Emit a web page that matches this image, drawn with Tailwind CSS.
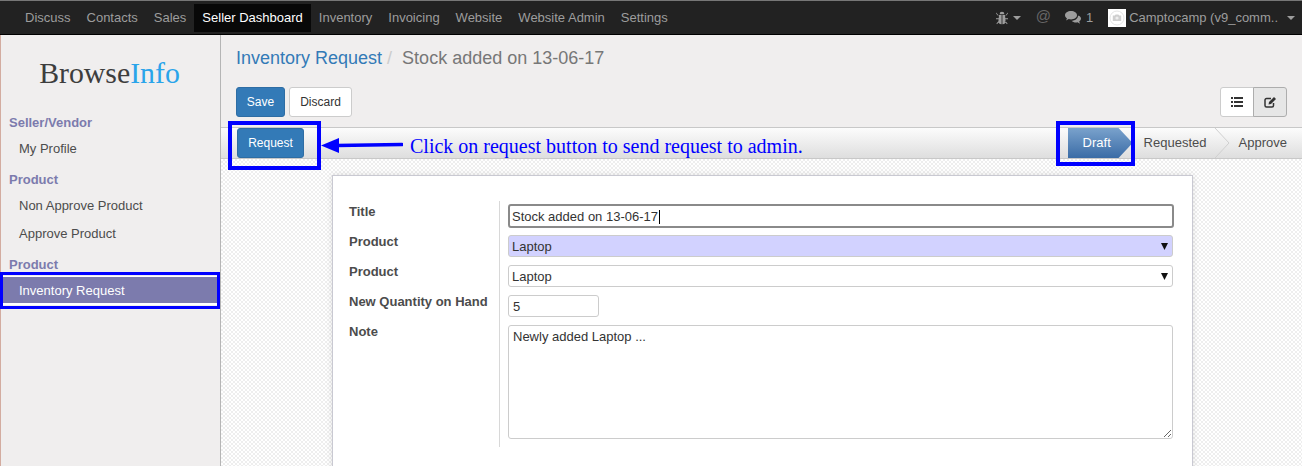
<!DOCTYPE html>
<html lang="en">
<head>
  <meta charset="UTF-8" />
  <meta name="viewport" content="width=device-width, initial-scale=1.0"/>
  <title>Inventory Request</title>
  <script src="https://cdn.jsdelivr.net/npm/@tailwindcss/browser@4"></script>
</head>
<body class="relative h-[466px] w-[1302px] overflow-hidden bg-[#f0eeee] font-['Liberation_Sans',Arial,sans-serif] text-[13px] text-[#4c4c4c]">

  <!-- top bar -->
  <nav class="flex h-[35px] items-center border-t border-b border-t-[#777] border-b-black bg-[#222] pl-[15px] pr-[5px] text-[#9d9d9d]">
    <a class="px-[10px]">Discuss</a>
    <a class="px-[6px]">Contacts</a>
    <a class="pl-[10px] pr-[8px]">Sales</a>
    <a class="flex h-[28px] items-center bg-[#080808] px-[8px] text-white">Seller Dashboard</a>
    <a class="px-[8px]">Inventory</a>
    <a class="px-[8px]">Invoicing</a>
    <a class="px-[8px]">Website</a>
    <a class="px-[8px]">Website Admin</a>
    <a class="px-[8px]">Settings</a>
    <div class="ml-auto flex items-center">
      <svg class="h-[14px] w-[12px]" viewBox="0 0 12 14" fill="#9d9d9d"><path d="M3.600 3.200a2.400 2.400 0 0 1 4.800 0zM3 4h2.600v9.200A3 3 0 0 1 2.400 10.500zM6.400 4H9l.6 6.500a3 3 0 0 1-3.200 2.700zM0 1.600l2.600 2.600-.6.6L-.2 2.400zM12 1.600 9.400 4.200l.6.6 2.200-2.400zM0 7.200h3v1H0zM9 7.200h3v1H9zM.4 12.600 2.600 10l.6.7L1 13.300zM11.600 12.600 9.400 10l-.6.7 2.200 2.600z"/></svg>
      <span class="ml-[5px] h-0 w-0 border-x-[4px] border-t-[4px] border-x-transparent border-t-[#9d9d9d]"></span>
      <span class="ml-[15px] -translate-y-px text-[15px] text-[#666]">@</span>
      <svg class="ml-[14px] h-[13px] w-[16px]" viewBox="0 0 16 13" fill="#9d9d9d"><path d="M6 0C2.700 0 0 1.800 0 4.200c0 1.300.8 2.400 2 3.200L1 9.600l2.800-1.500c.7.200 1.400.3 2.200.3 3.300 0 6-1.900 6-4.200S9.300 0 6 0z"/><path d="M13 4.700c0 2.800-3 5-6.400 5 1 1.100 2.600 1.800 4.400 1.800.5 0 1-.1 1.500-.2l2.500 1.400-.8-2.100c1.100-.8 1.800-1.800 1.800-3 0-1.200-.9-2.300-2.100-2.900z"/></svg>
      <span class="ml-[5px]">1</span>
      <span class="ml-[15px] flex h-[18px] w-[18px] items-center justify-center bg-white">
        <svg class="h-[16px] w-[16px]" viewBox="0 0 16 16" fill="none"><circle cx="8" cy="8" r="7" stroke="#e4e4e4" stroke-width="1"/><path d="M3.800 5.500h2l.8-1h2.800l.8 1h2v5.500H3.800z" fill="#cfcfcf"/><circle cx="8" cy="8" r="1.600" fill="#eee"/></svg>
      </span>
      <span class="ml-[3px]">Camptocamp (v9_comm..</span>
      <span class="ml-[9px] mr-[2px] h-0 w-0 border-x-[4px] border-t-[4px] border-x-transparent border-t-[#9d9d9d]"></span>
    </div>
  </nav>

  <div class="flex h-[431px]">
    <!-- sidebar -->
    <aside class="w-[221px] shrink-0 border-r border-l border-r-[#b5b5b5] border-l-[#d3aca0] bg-[#f0eeee]">
      <div class="flex h-[76px] items-center justify-center pr-[2px] font-['Liberation_Serif',serif] text-[29.800px] text-[#3d3d3d]">
        <span>Browse<span class="text-[#2aa4ea]">Info</span></span>
      </div>
      <h4 class="mt-[2px] h-[19px] pl-[8px] text-[13px] leading-[19px] font-bold text-[#7c7bad]">Seller/Vendor</h4>
      <a class="mt-[3px] block h-[28px] pl-[18px] leading-[28px]">My Profile</a>
      <h4 class="mt-[7px] h-[19px] pl-[8px] text-[13px] leading-[19px] font-bold text-[#7c7bad]">Product</h4>
      <a class="mt-[3px] block h-[28px] pl-[18px] leading-[28px]">Non Approve Product</a>
      <a class="block h-[28px] pl-[18px] leading-[28px]">Approve Product</a>
      <h4 class="mt-[7px] h-[19px] pl-[8px] text-[13px] leading-[19px] font-bold text-[#7c7bad]">Product</h4>
      <a class="mt-[2px] block h-[29px] border-t border-b-2 border-y-white bg-[#7c7bad] pl-[18px] leading-[27px] text-white">Inventory Request</a>
    </aside>

    <main class="flex min-w-0 flex-1 flex-col">
      <!-- control panel -->
      <div class="h-[92px] shrink-0 px-[15px]">
        <div class="flex h-[45px] items-center pt-[1px] text-[18px]">
          <a class="text-[#337ab7]">Inventory Request</a>
          <span class="ml-[5px] text-[#ccc]">/</span>
          <span class="ml-[10px] text-[#777]">Stock added on 13-06-17</span>
        </div>
        <div class="mt-[7px] flex items-center">
          <button class="h-[30px] w-[49px] rounded-[3px] border border-[#2e6da4] bg-[#337ab7] text-[12px] text-white">Save</button>
          <button class="ml-[4px] h-[30px] w-[63px] rounded-[3px] border border-[#ccc] bg-white text-[12px] text-[#333]">Discard</button>
          <div class="ml-auto flex h-[30px]">
            <button class="flex w-[34px] items-center justify-center rounded-l-[3px] border border-[#ccc] bg-white">
              <svg class="h-[10px] w-[12px]" viewBox="0 0 12 10" fill="#333"><path d="M0 0h2v2H0zM3 0h9v2H3zM0 4h2v2H0zM3 4h9v2H3zM0 8h2v2H0zM3 8h9v2H3z"/></svg>
            </button>
            <button class="-ml-px flex w-[34px] items-center justify-center rounded-r-[3px] border border-[#adadad] bg-[#e6e6e6]">
              <svg class="h-[12px] w-[13px]" viewBox="0 0 13 12" fill="none" stroke="#333" stroke-width="1.500"><path d="M9.500 7v2.500a1.500 1.500 0 0 1-1.500 1.500H2.500A1.500 1.500 0 0 1 1 9.500V4a1.500 1.500 0 0 1 1.500-1.500H7"/><path d="M4.500 8.500 5 6l5-5 2 2-5 5z" fill="#333" stroke="none"/></svg>
            </button>
          </div>
        </div>
      </div>

      <!-- status bar -->
      <div class="flex h-[32px] shrink-0 items-center justify-between border-y border-[#c8c8c8] bg-gradient-to-b from-[#fcfcfc] to-[#dedede] pl-[16px]">
        <button class="h-[30px] w-[67px] rounded-[3px] border border-[#2e6da4] bg-[#337ab7] text-[12px] text-white">Request</button>
        <div class="flex h-full items-center">
          <div class="flex h-full w-[65px] items-center bg-gradient-to-b from-[#7aa2cc] to-[#3a6ca6] pl-[15px] text-white [clip-path:polygon(0_0,51px_0,100%_50%,51px_100%,0_100%)]">Draft</div>
          <span class="ml-[11px] w-[70px]">Requested</span>
          <svg class="h-[30px] w-[16px]" viewBox="0 0 16 30" fill="none" stroke="#cfcfcf"><path d="M1 0l14 15L1 30"/></svg>
          <span class="ml-[9px] mr-[15px]">Approve</span>
        </div>
      </div>

      <!-- form area -->
      <div class="flex-1 bg-white bg-[repeating-conic-gradient(#eeeeee_0_25%,#ffffff_0_50%)] bg-[length:4px_4px] pt-[16px] pl-[111px]">
        <div class="flex h-[300px] w-[861px] border border-[#c9c9d2] bg-white pt-[25px] pl-[16px] shadow-[0_0_6px_rgba(0,0,0,0.12)]">
          <div class="w-[150px] shrink-0 font-bold text-[#4c4c4c]">
            <div class="mt-px h-[30px] leading-[20px]">Title</div>
            <div class="h-[30px] leading-[20px]">Product</div>
            <div class="h-[30px] leading-[20px]">Product</div>
            <div class="h-[30px] leading-[20px]">New Quantity on Hand</div>
            <div class="h-[30px] leading-[20px]">Note</div>
          </div>
          <div class="h-[246px] w-[675px] border-l border-[#d8d8d8] pt-[3px] pl-[8px] text-[#333]">
            <div class="flex h-[24px] w-[666px] items-center rounded-[3px] border-2 border-[#8a8a8a] bg-white pt-px pl-[2px]">
              <span>Stock added on 13-06-17</span><span class="ml-[1px] h-[14px] w-px bg-black"></span>
            </div>
            <div class="mt-[7px] flex h-[22px] w-[665px] items-center justify-between rounded-[3px] border border-[#ccc] bg-[#d2d2ff] pt-px pr-[4px] pl-[3px]">
              <span>Laptop</span>
              <svg class="h-[7px] w-[7px]" viewBox="0 0 7 7" fill="#111"><path d="M0 0h7L3.500 7z"/></svg>
            </div>
            <div class="mt-[8px] flex h-[22px] w-[665px] items-center justify-between rounded-[3px] border border-[#ccc] bg-white pt-px pr-[4px] pl-[3px]">
              <span>Laptop</span>
              <svg class="h-[7px] w-[7px]" viewBox="0 0 7 7" fill="#111"><path d="M0 0h7L3.500 7z"/></svg>
            </div>
            <input class="mt-[8px] block h-[22px] w-[91px] rounded-[3px] border border-[#ccc] bg-white px-[4px] text-[#333]" value="5" />
            <textarea class="mt-[8px] block h-[114px] w-[665px] rounded-[3px] border border-[#ccc] bg-white px-[4px] py-[2px] leading-[18px] text-[#333]">Newly added Laptop ...</textarea>
          </div>
        </div>
      </div>
    </main>
  </div>

  <!-- annotations drawn on top of the screenshot -->
  <div class="absolute top-[272px] left-0 h-[37px] w-[220px] border-[3px] border-[#0000ff]"></div>
  <div class="absolute top-[121px] left-[228px] h-[49px] w-[93px] border-4 border-[#0000ff]"></div>
  <div class="absolute top-[121px] left-[1056px] h-[45px] w-[79px] border-4 border-[#0000ff]"></div>
  <svg class="absolute top-[136px] left-[321px] h-[20px] w-[82px]" viewBox="0 0 82 20"><path d="M0 9.500 18 2v15z" fill="#0000ff"/><path d="M16 9.500l65-1" stroke="#0000ff" stroke-width="3.500" stroke-linecap="round"/></svg>
  <span class="absolute top-[134px] left-[410px] font-['Liberation_Serif',serif] text-[20px] leading-[24px] text-[#0000ff]">Click on request button to send request to admin.</span>
</body>
</html>
